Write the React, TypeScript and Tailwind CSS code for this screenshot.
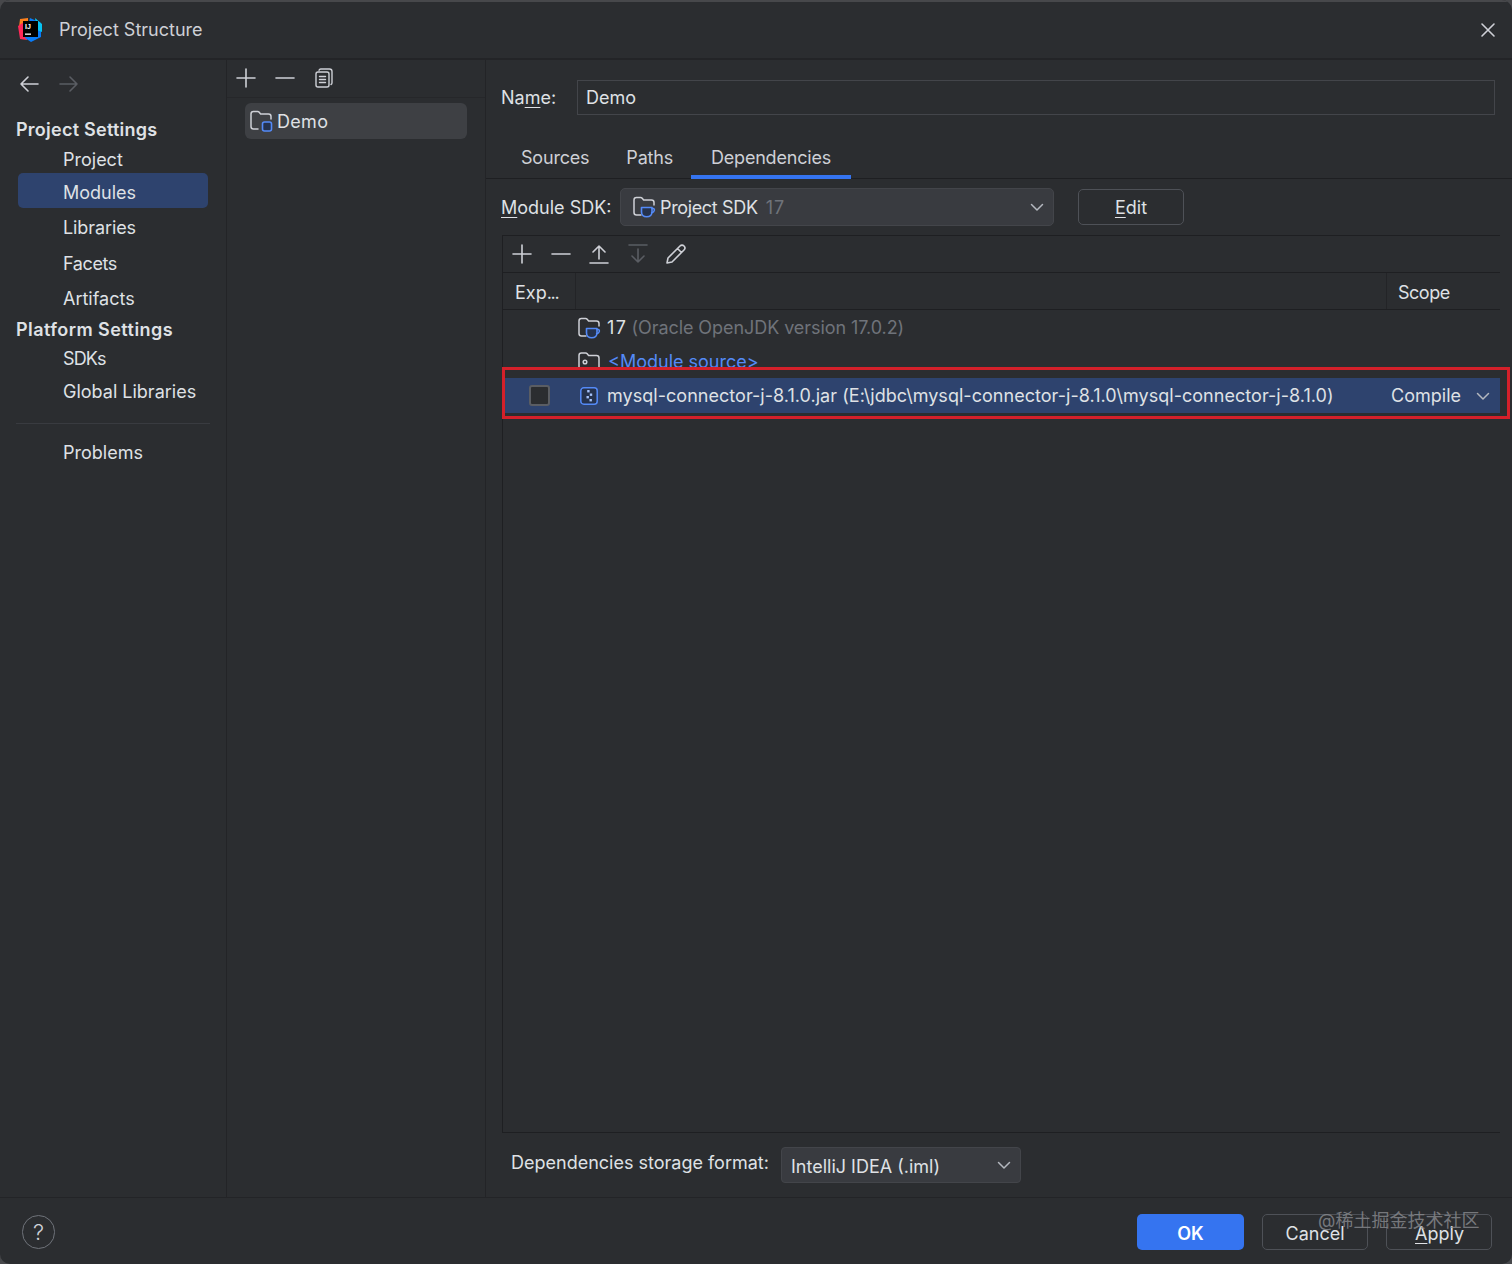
import React from "react";

const S = { fill: "none", stroke: "currentColor", strokeWidth: 1.6, strokeLinecap: "round", strokeLinejoin: "round" } as const;

function Plus() {
  return <svg width="22" height="22" viewBox="0 0 22 22" {...S}><path d="M11 2v18M2 11h18" /></svg>;
}
function Minus() {
  return <svg width="22" height="22" viewBox="0 0 22 22" {...S}><path d="M2 11h18" /></svg>;
}
function Copy() {
  return (
    <svg width="22" height="22" viewBox="0 0 22 22" {...S} strokeWidth={1.4}>
      <rect x="3" y="5" width="13" height="15" rx="2" />
      <path d="M6 3.2c.3-.7.9-1.2 1.7-1.2h8.800c1.500 0 2.500 1 2.500 2.500v11.300c0 .8-.4 1.400-1 1.700M6.500 9.500h6M6.500 12.500h6M6.500 15.500h6" />
    </svg>
  );
}
function FolderBase({ children }: { children?: React.ReactNode }) {
  return (
    <svg width="24" height="24" viewBox="0 0 24 24" fill="none" strokeLinecap="round" strokeLinejoin="round">
      <path d="M9 20H4.500C3 20 2 19 2 17.500V5c0-1.400 1-2.500 2.400-2.500h4.200c.7 0 1.200.3 1.600.8l1.400 1.700h7.900c1.400 0 2.500 1.100 2.500 2.500V10" stroke="#ced0d6" strokeWidth="1.500" />
      {children}
    </svg>
  );
}
function ModuleFolder() {
  return <FolderBase><rect x="13.500" y="13" width="9" height="9" rx="2" fill="#25324d" stroke="#548af7" strokeWidth="1.600" /></FolderBase>;
}
function SdkFolder() {
  return (
    <FolderBase>
      <path d="M9.500 12.500h10.500v4.500c0 2.500-1.800 4.800-5.250 4.800S9.500 19.500 9.500 17z" fill="#25324d" stroke="#548af7" strokeWidth="1.600" />
      <path d="M20 13.500h1.200c1.800 0 1.800 3.800-1.600 4.300" stroke="#548af7" strokeWidth="1.500" />
    </FolderBase>
  );
}
function SourceFolder() {
  return (
    <svg width="24" height="24" viewBox="0 0 24 24" fill="none" stroke="#ced0d6" strokeWidth="1.500" strokeLinejoin="round">
      <path d="M4.500 18.500C3 18.500 2 17.500 2 16V4.500C2 3.100 3 2 4.400 2h4.200c.7 0 1.200.3 1.600.8l1.400 1.700h7.900c1.400 0 2.500 1.100 2.500 2.500v9c0 1.500-1 2.500-2.500 2.500z" />
      <circle cx="8" cy="11" r="1.800" />
    </svg>
  );
}
function Jar() {
  return (
    <svg width="20" height="20" viewBox="0 0 20 20" fill="none">
      <rect x="1.800" y="1.800" width="16.400" height="16.400" rx="3" fill="#25324d" stroke="#548af7" strokeWidth="1.500" />
      <g fill="#a6c2fb">
        <rect x="8.200" y="4" width="2.400" height="2.400" />
        <rect x="10.800" y="7.500" width="2.400" height="2.400" />
        <rect x="7.500" y="10" width="2.400" height="2.400" />
        <rect x="10.500" y="13" width="2.400" height="2.400" />
      </g>
    </svg>
  );
}
function Chevron({ w = 14 }: { w?: number }) {
  return (
    <svg width={w} height={w} viewBox="0 0 14 14" fill="none" stroke="#b4b8bf" strokeWidth="1.500" strokeLinecap="round" strokeLinejoin="round">
      <path d="M1.500 4.500 7 10l5.500-5.500" />
    </svg>
  );
}
function Logo() {
  return (
    <svg width="26" height="26" viewBox="0 0 26 26">
      <path d="M3 2l8-1v9H2z" fill="#fc801d" />
      <path d="M1 9l6-4 3 18-7-1z" fill="#fe2857" />
      <path d="M13 1l11 5v14l-10 5-6-4z" fill="#087cfa" />
      <path d="M18 1l7 6v8l-5-2z" fill="#07c3f2" />
      <rect x="6" y="4" width="15" height="16" fill="#000" />
      <text x="8" y="11.500" fontSize="7" fontWeight="700" fill="#fff" fontFamily="'Liberation Sans',sans-serif">IJ</text>
      <rect x="8" y="16.500" width="6" height="1.300" fill="#fff" />
    </svg>
  );
}

function NavItem({ label, selected, className = "h-[35px] pt-[2px]" }: { label: string; selected?: boolean; className?: string }) {
  return (
    <div className={`mx-[18px] flex items-center rounded-[5px] pl-[45px] ${className} ${selected ? "bg-[#2e436e]" : ""}`}>{label}</div>
  );
}
function NavHead({ label, className }: { label: string; className: string }) {
  return <div className={`flex items-center pl-4 font-semibold ${className}`}>{label}</div>;
}
function OutlineBtn({ children }: { children: React.ReactNode }) {
  return (
    <div className="flex h-[36px] w-[106px] items-center justify-center rounded-[5px] border border-[#4e5157] pt-[3px]">{children}</div>
  );
}

export default function App() {
  return (
    <div className="h-[1264px] w-[1512px] bg-[#47484b]">
      <div className="relative flex h-[1264px] w-[1512px] flex-col overflow-hidden rounded-[10px] bg-[#2b2d30] text-[18px] leading-none text-[#dfe1e5] [font-family:Inter,'Noto_Sans_CJK_SC',sans-serif]">
        {/* title bar */}
        <div className="flex h-[60px] shrink-0 items-center border-b-2 border-t-2 border-b-[#232427] border-t-[#47484b] pl-[17px] pr-[16px]">
          <Logo />
          <span className="-mt-[1px] ml-[16px] text-[#ced0d6]">Project Structure</span>
          <svg className="ml-auto text-[#ced0d6]" width="16" height="16" viewBox="0 0 16 16" {...S}><path d="M2 2l12 12M14 2 2 14" /></svg>
        </div>

        {/* body */}
        <div className="flex min-h-0 flex-1">
          {/* left nav */}
          <aside className="flex w-[227px] shrink-0 flex-col border-r border-[#232427]">
            <div className="flex h-[53px] shrink-0 items-start gap-[20px] pl-[19px] pt-[14px]">
              <svg width="20" height="20" viewBox="0 0 20 20" {...S} className="text-[#ced0d6]"><path d="M19 10H2M9 3l-7 7 7 7" /></svg>
              <svg width="20" height="20" viewBox="0 0 20 20" {...S} className="text-[#5a5d63]"><path d="M1 10h17M11 3l7 7-7 7" /></svg>
            </div>
            <NavHead label="Project Settings" className="mt-[2px] h-[30px] tracking-[0.25px]" />
            <NavItem label="Project" className="h-[28px] pt-[2px]" />
            <NavItem label="Modules" selected className="h-[35px] pt-[5px]" />
            <NavItem label="Libraries" className="mt-[2px] h-[35px] pt-[1px] tracking-[-0.1px]" />
            <NavItem label="Facets" className="h-[35px] pt-[2px] tracking-[-0.4px]" />
            <NavItem label="Artifacts" className="h-[35px] pt-[2px]" />
            <NavHead label="Platform Settings" className="h-[28px] pt-[2px] tracking-[0.45px]" />
            <NavItem label="SDKs" className="h-[30px] pt-[2px] tracking-[-0.9px]" />
            <NavItem label="Global Libraries" className="h-[36px] pt-[1px]" />
            <div className="mx-[16px] mt-[14px] h-px bg-[#393b40]" />
            <NavItem label="Problems" className="mt-[11px] h-[35px]" />
          </aside>

          {/* module list */}
          <section className="flex w-[259px] shrink-0 flex-col border-r border-[#232427]">
            <div className="flex h-[38px] shrink-0 items-center gap-[17px] border-b border-[#26272a] pb-[2px] pl-[8px] text-[#ced0d6]">
              <Plus />
              <Minus />
              <Copy />
            </div>
            <div className="mx-[18px] mt-[5px] flex h-[36px] items-center rounded-[6px] bg-[#3e4044] pl-[4px]">
              <ModuleFolder />
              <span className="ml-[4px] mt-[2px] tracking-[0.3px]">Demo</span>
            </div>
          </section>

          {/* details */}
          <main className="flex min-w-0 flex-1 flex-col">
            <div className="mr-[17px] mt-[20px] flex h-[35px] shrink-0 items-center pl-[15px]">
              <span className="w-[76px]">Na<span className="underline underline-offset-[3px]">m</span>e:</span>
              <div className="flex h-full flex-1 items-center border border-[#43454a] pl-[8px]">Demo</div>
            </div>

            <div className="mt-[25px] flex h-[39px] shrink-0 border-b border-[#1e1f22] pl-[15px] tracking-[-0.2px]">
              <div className="flex h-[39px] items-center pb-[4px] pl-[20px] pr-[20px] text-[#ced0d6]">Sources</div>
              <div className="flex h-[39px] items-center pb-[4px] pl-[17px] pr-[18px] text-[#ced0d6]">Paths</div>
              <div className="flex h-[39px] items-center border-b-4 border-[#3574f0] px-[20px] text-[#ced0d6]">Dependencies</div>
            </div>

            <div className="mt-[9px] flex h-[38px] shrink-0 items-center pl-[15px]">
              <span className="mt-[2px] w-[119px]"><span className="underline underline-offset-[3px]">M</span>odule SDK:</span>
              <div className="flex h-full w-[434px] items-center rounded-[5px] border border-[#43454a] bg-[#393b40] pl-[11px] pr-[9px]">
                <SdkFolder />
                <span className="ml-[4px] mt-[2px] tracking-[-0.35px]">Project SDK</span>
                <span className="ml-[8px] mt-[2px] tracking-[1px] text-[#6f737a]">17</span>
                <span className="ml-auto"><Chevron /></span>
              </div>
              <div className="ml-[24px] flex h-[36px] w-[106px] items-center justify-center rounded-[5px] border border-[#4e5157]">
                <span className="mt-[2px]"><span className="underline underline-offset-[3px]">E</span>dit</span>
              </div>
            </div>

            {/* table */}
            <div className="ml-[16px] mr-[12px] mt-[9px] flex min-h-0 flex-1 flex-col border-y border-l border-[#1e1f22]">
              <div className="flex h-[37px] shrink-0 items-center gap-[16.5px] border-b border-[#1e1f22] pl-[8px] text-[#ced0d6]">
                <Plus />
                <Minus />
                <svg width="22" height="22" viewBox="0 0 22 22" {...S}><path d="M11 16V3M5 9l6-6 6 6M2 20h18" /></svg>
                <svg width="22" height="22" viewBox="0 0 22 22" {...S} className="text-[#5a5d63]"><path d="M11 6v13M5 13l6 6 6-6M2 2h18" /></svg>
                <svg width="22" height="22" viewBox="0 0 22 22" {...S}><path d="M15 3 3 15l-1 5 5-1L19 7a2.800 2.800 0 0 0-4-4zM12.500 5.500l4 4" /></svg>
              </div>
              <div className="flex h-[37px] shrink-0 items-center border-b border-[#1e1f22]">
                <div className="flex h-full w-[73px] items-center border-r border-[#232427] pl-[12px] pt-[3px]">Exp<span className="tracking-[-1.3px]">...</span></div>
                <div className="flex-1" />
                <div className="flex h-full w-[114px] items-center border-l border-[#232427] pl-[11px] pt-[3px] tracking-[-0.5px]">Scope</div>
              </div>
              <div className="flex h-[35px] shrink-0 items-center pl-[74px]">
                <SdkFolder />
                <span className="ml-[6px] mt-[1px] tracking-[1.5px]">17</span>
                <span className="ml-[4px] mt-[1px] tracking-[-0.07px] text-[#6f737a]">(Oracle OpenJDK version 17.0.2)</span>
              </div>
              <div className="flex h-[23px] shrink-0 items-start overflow-hidden pl-[74px] pt-[6px]">
                <SourceFolder />
                <span className="ml-[7px] mt-[2px] text-[#548af7]">&lt;Module source&gt;</span>
              </div>
              <div className="h-[10px] shrink-0" />
              <div className="flex h-[35px] shrink-0 items-center bg-[#2e436e]">
                <div className="ml-[26px] h-[21px] w-[21px] rounded-[3px] border-2 border-[#5a5d63] bg-[#2b2d30]" />
                <span className="ml-[29px]"><Jar /></span>
                <span className="ml-[8px] tracking-[0.035px]">mysql-connector-j-8.1.0.jar (E:\jdbc\mysql-connector-j-8.1.0\mysql-connector-j-8.1.0)</span>
                <span className="ml-auto">Compile</span>
                <span className="ml-[15px] mr-[10px]"><Chevron /></span>
              </div>
            </div>

            <div className="flex h-[64px] shrink-0 items-center pl-[25px]">
              <span className="-mt-[5px] w-[270px] whitespace-nowrap">Dependencies storage format:</span>
              <div className="flex h-[36px] w-[240px] items-center rounded-[4px] border border-[#43454a] bg-[#393b40] pl-[9px] pr-[9px]">
                <span className="mt-[3px]">IntelliJ IDEA (.iml)</span>
                <span className="ml-auto"><Chevron /></span>
              </div>
            </div>
          </main>
        </div>

        {/* footer */}
        <footer className="flex h-[67px] shrink-0 items-center border-t border-[#232427] pl-[22px] pr-[20px] pt-[2px]">
          <div className="flex h-[34px] w-[33px] items-center justify-center rounded-full border border-[#6f737a] text-[22px] font-light text-[#ced0d6]">?</div>
          <div className="ml-auto flex items-center gap-[18px]">
            <div className="flex h-[36px] w-[107px] items-center justify-center rounded-[5px] bg-[#3574f0] pt-[3px] font-semibold text-white">OK</div>
            <OutlineBtn>Cancel</OutlineBtn>
            <OutlineBtn><span className="ml-[1px]"><span className="underline underline-offset-[3px]">A</span>pply</span></OutlineBtn>
          </div>
        </footer>

        {/* annotation + watermark overlay */}
        <div className="pointer-events-none absolute left-[502px] top-[367px] h-[52px] w-[1008px] border-[3px] border-[#d4202a]" />
        <div className="pointer-events-none absolute left-[1318px] top-[1212px] text-[18px] text-[#8a8c90]/80">@稀土掘金技术社区</div>
      </div>
    </div>
  );
}
